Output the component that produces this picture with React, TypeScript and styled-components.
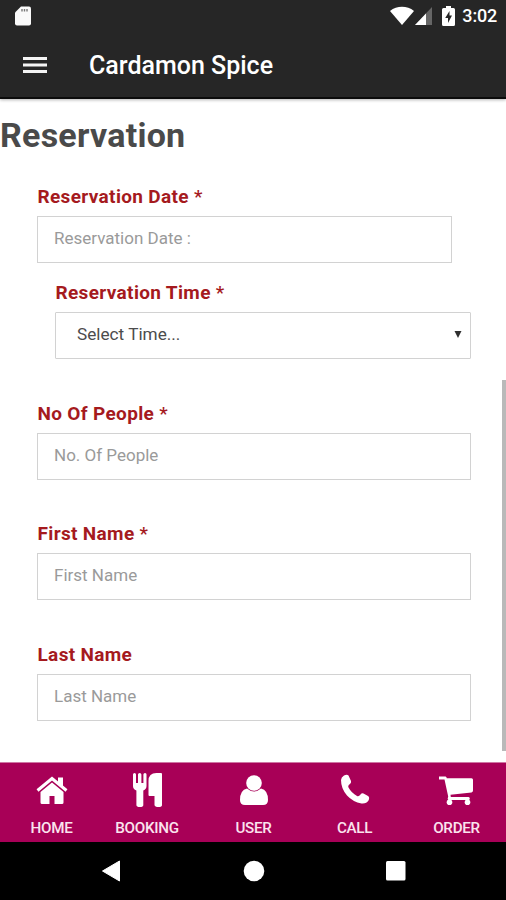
import React from "react";
import styled, { createGlobalStyle } from "styled-components";

const GlobalStyle = createGlobalStyle`
  *, *::before, *::after { box-sizing: border-box; }
  body { margin: 0; background: #fff; font-family: Roboto, sans-serif; }
`;

const Screen = styled.div`
  position: relative;
  display: flex;
  flex-direction: column;
  width: 506px;
  height: 900px;
  overflow: hidden;
  background: #fff;
`;

const Header = styled.header`
  flex: none;
  height: 99px;
  background: #262626;
  border-bottom: 2px solid #0b0b0b;
  box-shadow: 0 1px 3px rgba(0, 0, 0, 0.3);
  color: #fff;
`;

const StatusBar = styled.div`
  display: flex;
  align-items: center;
  justify-content: space-between;
  height: 31px;
  padding: 0 9px 0 14px;
`;

const StatusGroup = styled.div`
  display: flex;
  align-items: center;
`;

const BatterySlot = styled.span`
  display: flex;
  margin-left: 9px;
`;

const Clock = styled.span`
  margin-left: 7px;
  font-size: 18px;
  font-weight: 500;
  line-height: 32px;
  letter-spacing: -0.2px;
`;

const TitleBar = styled.div`
  display: flex;
  align-items: center;
  height: 67px;
  padding-left: 23px;
`;

const MenuButton = styled.button`
  display: flex;
  padding: 0;
  border: 0;
  background: none;
  margin-right: 42px;
`;

const AppTitle = styled.span`
  padding-top: 3px;
  font-size: 25px;
  font-weight: 500;
  line-height: 30px;
`;

const Content = styled.main`
  flex: 1;
  min-height: 0;
`;

const Heading = styled.h1`
  margin: 0;
  padding: 15px 0 0 0;
  font-size: 34px;
  line-height: 42px;
  font-weight: 700;
  letter-spacing: 0.25px;
  color: #4a4a4a;
`;

const Form = styled.form`
  display: flex;
  flex-direction: column;
  padding: 28px 35px 0 37px;
`;

const Field = styled.div<{ $gap: number; $left?: number; $right?: number }>`
  display: flex;
  flex-direction: column;
  gap: 7px;
  margin: 0 ${(p) => p.$right ?? 0}px ${(p) => p.$gap}px ${(p) => p.$left ?? 0}px;
`;

const Label = styled.label`
  padding-left: 0.5px;
  font-size: 19px;
  line-height: 25px;
  font-weight: 700;
  letter-spacing: 0.34px;
  color: #a51a1e;
`;

const Asterisk = styled.span`
  font-weight: 500;
`;

const Input = styled.input`
  width: 100%;
  height: 47px;
  padding: 0 16px 3px;
  border: 1.5px solid #d2d2d2;
  border-radius: 0;
  outline: 0;
  background: #fff;
  font: 400 17px Roboto, sans-serif;
  color: #555;
  &::placeholder { color: #9a9a9a; opacity: 1; }
`;

const Select = styled.div`
  display: flex;
  align-items: center;
  justify-content: space-between;
  height: 47px;
  padding: 0 8px 3px 21px;
  border: 1.5px solid #d2d2d2;
  border-radius: 1px;
  font-size: 17.2px;
  color: #4c4c4c;
`;

const ScrollThumb = styled.div`
  position: absolute;
  top: 380px;
  right: 0;
  width: 4px;
  height: 371px;
  background: #b9b9b9;
`;

const TabBar = styled.nav`
  flex: none;
  display: grid;
  grid-template-columns: repeat(5, 1fr);
  height: 80px;
  padding-left: 1px;
  border-top: 1px solid #cf76a4;
  background: #a80057;
`;

const Tab = styled.a<{ $nudge?: number }>`
  display: flex;
  flex-direction: column;
  align-items: center;
  padding-top: 7px;
  margin-left: ${(p) => p.$nudge ?? 0}px;
  color: #fff;
`;

const TabText = styled.span`
  margin-top: 11px;
  font-size: 15.2px;
  line-height: 20px;
  font-weight: 500;
  letter-spacing: -0.3px;
  color: #fbe3ee;
`;

const SystemNav = styled.div`
  flex: none;
  display: flex;
  align-items: center;
  justify-content: space-between;
  height: 58px;
  padding: 0 100px 0 101px;
  background: #000;
`;

const SdCard = () => (
  <svg width="18" height="22" viewBox="0 0 18 22">
    <path d="M7 1.500h8a2 2 0 0 1 2 2v15a2 2 0 0 1-2 2H3a2 2 0 0 1-2-2V7.500z" fill="#fafafa" />
    <path d="M8 4v2.500M10.500 4v2.500M13 4v2.500" stroke="#777" strokeWidth="1.400" />
  </svg>
);

const Wifi = () => (
  <svg width="24" height="20" viewBox="0 0 24 20">
    <path d="M0 5C7-.6 17-.6 24 5L12 19z" fill="#fff" />
  </svg>
);

const Signal = () => (
  <svg width="19" height="18" viewBox="0 0 19 18">
    <path d="M18 0v18H1z" fill="#666" />
    <path d="M12 6.500V18H1z" fill="#fff" />
  </svg>
);

const Battery = () => (
  <svg width="13" height="20" viewBox="0 0 13 20">
    <path d="M4 0h5v2h2.500A1.500 1.500 0 0 1 13 3.500v15a1.500 1.500 0 0 1-1.500 1.500h-10A1.500 1.500 0 0 1 0 18.500v-15A1.500 1.500 0 0 1 1.500 2H4z" fill="#fff" />
    <path d="M7.500 5L3.200 12H6v5l4-7.500H7.500z" fill="#262626" />
  </svg>
);

const MenuIcon = () => (
  <svg width="24" height="20" viewBox="0 0 24 20">
    <path d="M0 3.500h24M0 10h24M0 16.500h24" stroke="#f4f4f4" strokeWidth="2.800" />
  </svg>
);

const Home = () => (
  <svg width="32" height="37" viewBox="0 0 32 37">
    <path d="M1.500 20.500L16 8.500l14.500 12" fill="none" stroke="#fff" strokeWidth="3" />
    <path d="M22 7.500h5v10l-5-4z" fill="#fff" />
    <path d="M16 12.500L27.500 22v10.500a1.500 1.500 0 0 1-1.500 1.500H18.500v-8h-5v8H6A1.500 1.500 0 0 1 4.500 32.500V22z" fill="#fff" />
  </svg>
);

const Cutlery = () => (
  <svg width="29" height="37" viewBox="0 0 29 37">
    <path d="M0 4.500Q0 3 1.500 3T3 4.500V13h2V4.500Q5 3 6.700 3T8.400 4.500V13h2V4.500Q10.400 3 12 3t1.500 1.500V16q0 3-3.200 4.500V35q0 2-3.400 2T3.400 35V20.500Q0 19 0 16z" fill="#fff" />
    <path d="M29 4v31q0 2-3.500 2T21.500 35V26H16.500q-1 0-1-1V11q0-8 8-8H28q1 0 1 1z" fill="#fff" />
  </svg>
);

const User = () => (
  <svg width="30" height="37" viewBox="0 0 30 37">
    <circle cx="15" cy="13" r="7.800" fill="#fff" />
    <path d="M8 18.500Q15 24.500 22 18.500Q29 20 29 30Q29 35 24 35H6Q1 35 1 30Q1 20 8 18.500z" fill="#fff" />
  </svg>
);

const Phone = () => (
  <svg width="30" height="37" viewBox="0 0 30 37">
    <path d="M1 10Q1.200 7 4 5.500Q7 4 8.500 5.500L11 11Q11.500 12.500 10 14Q7.500 15.500 8.500 17.500Q11.500 23 17 26Q18.800 27 20.500 24.500Q21.800 22.800 23.500 23.500L28 26Q30 27.200 28.500 30.500Q26.500 34 21.500 33.500Q13 32 7 25.500Q1 18.500 1 10z" fill="#fff" />
  </svg>
);

const Cart = () => (
  <svg width="35" height="37" viewBox="0 0 35 37">
    <path d="M0 6.500H6.500Q7.500 6.500 7.800 8.200H32.500Q34 8.200 34 9.700V20.500Q34 22.200 32.500 22.400L11.500 24.800L11.800 27H29.500Q30.800 27 30.800 28.500T29.500 30H10Q8.600 30 8.700 28.500L9.200 26.500L5.500 9.500H0Q-1 8 0 6.500z" fill="#fff" />
    <circle cx="10.500" cy="32.200" r="2.800" fill="#fff" />
    <circle cx="28.500" cy="32.200" r="2.800" fill="#fff" />
  </svg>
);

const DropArrow = () => (
  <svg width="8" height="8" viewBox="0 0 8 8">
    <path d="M.5 1h7L4 8z" fill="#303030" />
  </svg>
);

const tabs = [
  { text: "HOME", Icon: Home },
  { text: "BOOKING", Icon: Cutlery, nudge: -11 },
  { text: "USER", Icon: User },
  { text: "CALL", Icon: Phone },
  { text: "ORDER", Icon: Cart, nudge: 2 },
];

export default function App() {
  return (
    <Screen>
      <GlobalStyle />
      <Header>
        <StatusBar>
          <SdCard />
          <StatusGroup>
            <Wifi />
            <Signal />
            <BatterySlot><Battery /></BatterySlot>
            <Clock>3:02</Clock>
          </StatusGroup>
        </StatusBar>
        <TitleBar>
          <MenuButton aria-label="Menu"><MenuIcon /></MenuButton>
          <AppTitle>Cardamon Spice</AppTitle>
        </TitleBar>
      </Header>
      <Content>
        <Heading>Reservation</Heading>
        <Form>
          <Field $gap={17} $right={19}>
            <Label>Reservation Date <Asterisk>*</Asterisk></Label>
            <Input placeholder="Reservation Date :" />
          </Field>
          <Field $gap={42} $left={18}>
            <Label>Reservation Time <Asterisk>*</Asterisk></Label>
            <Select><span>Select Time...</span><DropArrow /></Select>
          </Field>
          <Field $gap={41}>
            <Label>No Of People <Asterisk>*</Asterisk></Label>
            <Input placeholder="No. Of People" />
          </Field>
          <Field $gap={42}>
            <Label>First Name <Asterisk>*</Asterisk></Label>
            <Input placeholder="First Name" />
          </Field>
          <Field $gap={0}>
            <Label>Last Name</Label>
            <Input placeholder="Last Name" />
          </Field>
        </Form>
      </Content>
      <ScrollThumb />
      <TabBar>
        {tabs.map(({ text, Icon, nudge }) => (
          <Tab key={text} $nudge={nudge}>
            <Icon />
            <TabText>{text}</TabText>
          </Tab>
        ))}
      </TabBar>
      <SystemNav>
        <svg width="20" height="22" viewBox="0 0 20 22">
          <path d="M18.500 1v20L1.500 11z" fill="#fff" stroke="#fff" strokeLinejoin="round" />
        </svg>
        <svg width="22" height="22" viewBox="0 0 22 22">
          <circle cx="11" cy="11" r="10.300" fill="#fff" />
        </svg>
        <svg width="20" height="20" viewBox="0 0 20 20">
          <rect width="19.500" height="19.500" rx="1.500" fill="#fff" />
        </svg>
      </SystemNav>
    </Screen>
  );
}
